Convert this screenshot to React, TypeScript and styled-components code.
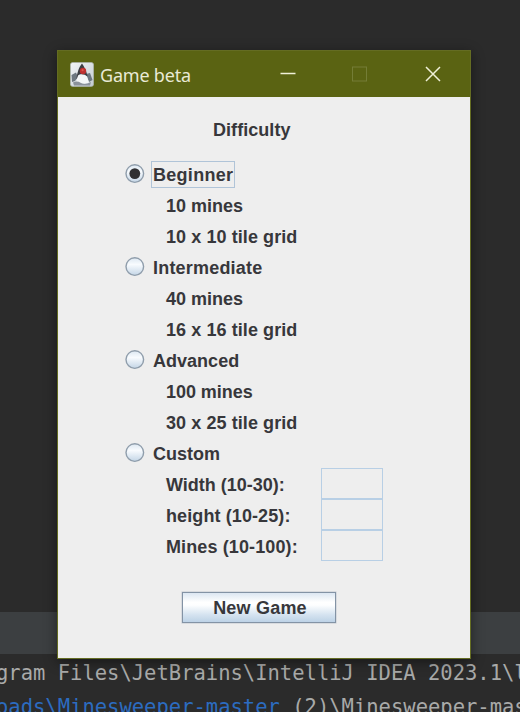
import React from "react";
import styled, { createGlobalStyle } from "styled-components";

const GlobalStyle = createGlobalStyle`
  * { box-sizing: border-box; }
  body { margin: 0; background: #2b2b2b; overflow: hidden; }
`;

const Desktop = styled.main`
  position: relative;
  width: 520px;
  height: 712px;
  overflow: hidden;
  background: #2b2b2b;
  display: flex;
  flex-direction: column;
  justify-content: flex-end;
`;

const ToolStrip = styled.div`
  height: 42px;
  background: #3c3f41;
`;

const Console = styled.div`
  height: 58px;
  padding-top: 2px;
  margin-left: -4px;
  overflow: hidden;
  white-space: pre;
  color: #a9aaa9;
  font: 20.5px/35px "DejaVu Sans Mono", monospace;
`;

const ConsoleLine = styled.div`
  height: 34px;
`;

const Path = styled.span`
  color: #2c6cc0;
`;

const Dialog = styled.section`
  position: absolute;
  left: 57px;
  top: 50px;
  width: 414px;
  height: 609px;
  display: flex;
  flex-direction: column;
  border: 1px solid #646c22;
  background: #eeeeee;
  box-shadow: 0 3px 12px rgba(0, 0, 0, 0.45);
`;

const TitleBar = styled.header`
  height: 46px;
  flex: none;
  display: flex;
  align-items: center;
  padding-left: 12px;
  background: #5a6312;
`;

const Title = styled.h1`
  flex: 1;
  margin: 1px 0 0 6px;
  color: #e9ead6;
  font: 400 18px/24px "Noto Sans", sans-serif;
  letter-spacing: -0.2px;
`;

const Controls = styled.div`
  display: flex;
  margin-right: 1px;
`;

const ControlButton = styled.button`
  width: 72.5px;
  height: 46px;
  padding: 0;
  border: 0;
  background: none;
  display: grid;
  place-items: center;
`;

const Content = styled.div`
  flex: 1;
  display: flex;
  flex-direction: column;
  color: #37373b;
  font: 700 18px/31px "Liberation Sans", Arial, sans-serif;
`;

const Heading = styled.h2`
  margin: 18px 0 14px 155px;
  font: inherit;
  letter-spacing: 0.05px;
`;

const Row = styled.div`
  display: flex;
  height: 31px;
  padding-left: 67px;
`;

const RadioLabel = styled.span<{ $focused?: boolean; $spacing: number }>`
  height: 27px;
  margin: 1px 0 0 6px;
  padding: 0 1px 0 1px;
  line-height: 27px;
  border: 1px solid ${(p) => (p.$focused ? "#b0c4d8" : "transparent")};
  letter-spacing: ${(p) => p.$spacing}px;
`;

const Detail = styled.div<{ $spacing: number }>`
  height: 31px;
  padding-left: 108px;
  letter-spacing: ${(p) => p.$spacing}px;
`;

const FieldRow = styled.label<{ $spacing: number }>`
  height: 31px;
  display: grid;
  grid-template-columns: 155px 62px;
  padding-left: 108px;
  letter-spacing: ${(p) => p.$spacing}px;
`;

const Field = styled.input`
  width: 62px;
  height: 31px;
  margin-top: -2px;
  padding: 0 4px;
  border: 1px solid #b8cfe5;
  border-radius: 0;
  background: #eeeeee;
  font: inherit;
  outline: 0;
`;

const NewGame = styled.button`
  width: 154px;
  height: 31px;
  margin: 29px 0 0 124px;
  padding: 2px 0 0 2px;
  border: 1px solid #8393a5;
  box-shadow: 0 0 0 0.5px rgba(131, 147, 165, 0.4);
  background: linear-gradient(#dce7f2 0%, #ffffff 32%, #fdfeff 42%, #d5e3f0 75%, #bdd2e6 100%);
  color: inherit;
  font: inherit;
  line-height: 27px;
  letter-spacing: 0.2px;
`;

const RadioSvg = styled.svg`
  flex: none;
  margin-top: 3px;
`;

function Radio({ checked }: { checked?: boolean }) {
  return (
    <RadioSvg width="20" height="21" viewBox="0 0 20 21">
      <defs>
        <linearGradient id="radioFace" x1="0" y1="0" x2="0" y2="1">
          <stop offset="0" stopColor="#dce7f1" />
          <stop offset=".38" stopColor="#f8fbfe" />
          <stop offset="1" stopColor="#c3d5e6" />
        </linearGradient>
      </defs>
      <circle cx="9.8" cy="10.6" r="8.8" fill="url(#radioFace)" stroke="#8f9dab" strokeWidth="1.4" />
      {checked && <circle cx="9.8" cy="10.6" r="5.4" fill="#303033" />}
    </RadioSvg>
  );
}

function JavaIcon() {
  return (
    <svg width="24" height="25" viewBox="0 0 24 25">
      <defs>
        <linearGradient id="tile" x1="0" y1="0" x2="1" y2="1">
          <stop stopColor="#f2f5f7" />
          <stop offset="1" stopColor="#c3cbd2" />
        </linearGradient>
      </defs>
      <rect x=".4" y=".4" width="23.2" height="24" rx="2.5" fill="url(#tile)" stroke="#aeb5b2" strokeWidth=".7" />
      <path d="M1.5 13 6 10.5 8 15 5 19 2 20Z M16 12 20 11 22.5 18 19 20Z" fill="#6d7780" />
      <path d="M12 1.5 C14 4 16 8 17.5 14 L15 15 8 15 6.5 17 C7 11 9 5 12 1.5Z" fill="#3b3d43" />
      <path d="M8 13.5 C10 11.5 15 12 17 14.5 L19 20.5 C15 22.5 11 20.5 6 22 L7 17Z" fill="#f4f6f7" />
      <path d="M3 20.5 Q7 18.5 11 21 T21 20 L20 23.5 H4Z" fill="#8b929b" />
      <circle cx="13" cy="9" r="3.2" fill="#bd3030" />
      <circle cx="12.6" cy="8.2" r="1.1" fill="#e0524a" />
    </svg>
  );
}

const levels = [
  { name: "Beginner", spacing: 0.28, checked: true, mines: "10 mines", minesSpacing: 0, grid: "10 x 10 tile grid" },
  { name: "Intermediate", spacing: 0.2, checked: false, mines: "40 mines", minesSpacing: 0, grid: "16 x 16 tile grid" },
  { name: "Advanced", spacing: 0.02, checked: false, mines: "100 mines", minesSpacing: -0.05, grid: "30 x 25 tile grid" },
];

const fields = [
  { label: "Width (10-30):", spacing: 0 },
  { label: "height (10-25):", spacing: 0.1 },
  { label: "Mines (10-100):", spacing: 0.12 },
];

export default function App() {
  return (
    <>
      <GlobalStyle />
      <Desktop>
        <ToolStrip />
        <Console>
          <ConsoleLine>{"gram Files\\JetBrains\\IntelliJ IDEA 2023.1\\l"}</ConsoleLine>
          <ConsoleLine>
            <Path>{"oads\\Minesweeper-master"}</Path>
            {" (2)\\Minesweeper-mas"}
          </ConsoleLine>
        </Console>
        <Dialog>
          <TitleBar>
            <JavaIcon />
            <Title>Game beta</Title>
            <Controls>
              <ControlButton aria-label="Minimize">
                <svg width="16" height="16"><path d="M.5 7.5h15" stroke="#f0f0d8" strokeWidth="1.5" /></svg>
              </ControlButton>
              <ControlButton aria-label="Maximize" disabled>
                <svg width="16" height="16"><rect x=".5" y="1" width="14" height="14" fill="none" stroke="#747d36" /></svg>
              </ControlButton>
              <ControlButton aria-label="Close">
                <svg width="16" height="16"><path d="M1 1 15 15M15 1 1 15" stroke="#eff0d8" strokeWidth="1.5" /></svg>
              </ControlButton>
            </Controls>
          </TitleBar>
          <Content>
            <Heading>Difficulty</Heading>
            {levels.map((level) => (
              <React.Fragment key={level.name}>
                <Row>
                  <Radio checked={level.checked} />
                  <RadioLabel $focused={level.checked} $spacing={level.spacing}>{level.name}</RadioLabel>
                </Row>
                <Detail $spacing={level.minesSpacing}>{level.mines}</Detail>
                <Detail $spacing={0.08}>{level.grid}</Detail>
              </React.Fragment>
            ))}
            <Row>
              <Radio />
              <RadioLabel $spacing={0}>Custom</RadioLabel>
            </Row>
            {fields.map((field) => (
              <FieldRow key={field.label} $spacing={field.spacing}>
                {field.label}
                <Field />
              </FieldRow>
            ))}
            <NewGame>New Game</NewGame>
          </Content>
        </Dialog>
      </Desktop>
    </>
  );
}
